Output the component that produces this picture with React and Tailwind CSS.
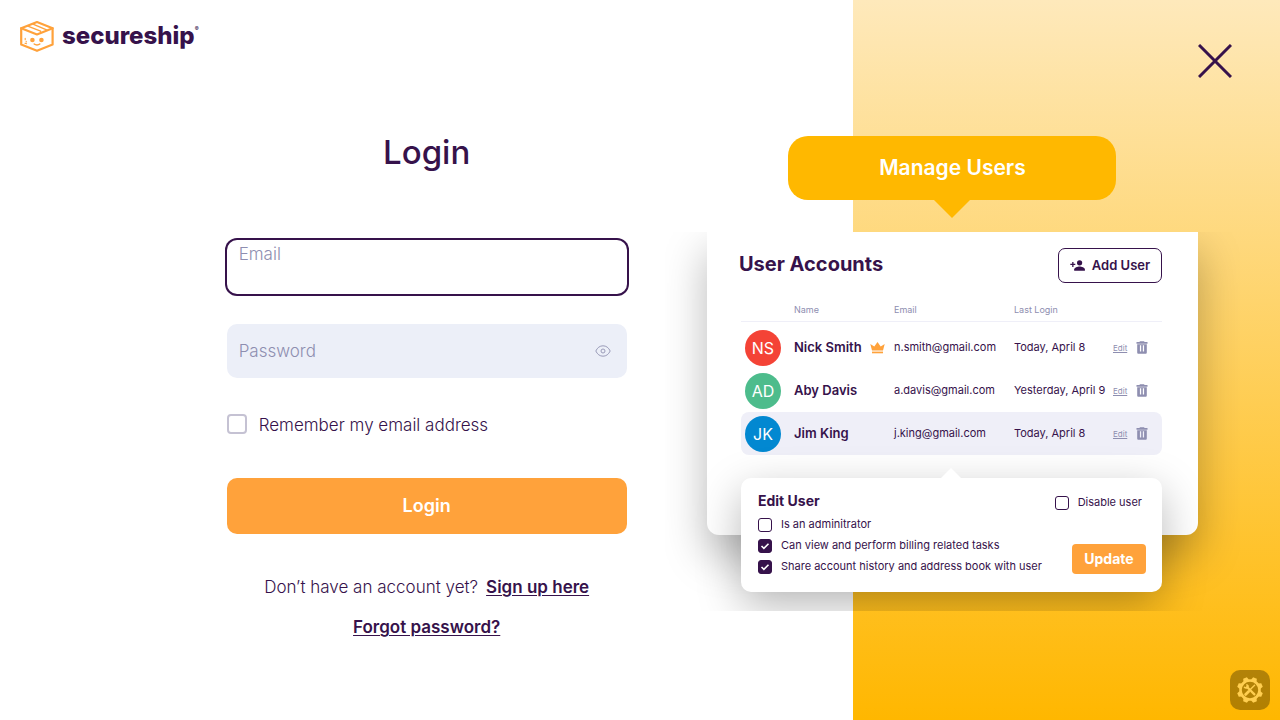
import React, { useState } from "react";

const USERS = [
  { initials: "NS", name: "Nick Smith", email: "n.smith@gmail.com", login: "Today, April 8", color: "bg-[#f44336]", owner: true },
  { initials: "AD", name: "Aby Davis", email: "a.davis@gmail.com", login: "Yesterday, April 9", color: "bg-[#4dbc8c]" },
  { initials: "JK", name: "Jim King", email: "j.king@gmail.com", login: "Today, April 8", color: "bg-[#0288d1]", selected: true },
];

function BoxLogo() {
  return (
    <svg viewBox="0 0 34 32" className="h-8 w-[34px] shrink-0" fill="none" stroke="#ffa23b" strokeWidth="2.2" strokeLinejoin="round" strokeLinecap="round" aria-hidden="true">
      <path d="M17 2 32.600 8.200v16.400L17 30.800 1.200 24.600V8.200Z" />
      <path d="M1.200 8.200 17 14.400l15.600-6.200" />
      <path d="M13 4.200 26.600 9.800M7.800 6.200 20.600 11.200v1.400" strokeWidth="1.300" />
      <path d="M14.200 24c1.400 1.200 4.200 1.200 5.600 0" strokeWidth="1.500" />
      <path d="M5.200 18.200v1.600M6.200 21.200v.8M5 23.200l1.600.5" strokeWidth="1.100" />
      <circle cx="12.400" cy="20" r="2.300" fill="#ffa23b" stroke="none" />
      <circle cx="21.400" cy="20" r="2.300" fill="#ffa23b" stroke="none" />
    </svg>
  );
}

function EyeIcon() {
  return (
    <svg viewBox="0 0 16 12" className="h-3 w-4" fill="none" stroke="#9a9bb8" strokeWidth="1" aria-hidden="true">
      <path d="M.8 6C2.400 2.600 4.900.8 8 .8S13.600 2.600 15.200 6C13.600 9.400 11.100 11.200 8 11.200S2.400 9.400.8 6Z" />
      <circle cx="8" cy="6" r="2" />
    </svg>
  );
}

function CrownIcon() {
  return (
    <svg viewBox="0 0 15 12" className="h-3 w-[15px]" fill="#ffa23b" aria-hidden="true">
      <path d="M2 8.400.3 2 4.300 4.600 7.500 0l3.200 4.600L14.700 2 13 8.400Z" />
      <path d="M2 9.600h11v1.700H2z" />
    </svg>
  );
}

function TrashIcon() {
  return (
    <svg viewBox="0 0 12 13" className="h-[13px] w-3" fill="#8e8eb0" aria-hidden="true">
      <path fillRule="evenodd" d="M4 .2h4l.6.9H11.500v1.600H.5V1.100h2.900ZM1.200 3.300h9.600v8.200c0 .8-.5 1.300-1.300 1.300h-7c-.8 0-1.300-.5-1.300-1.300ZM3.900 4.200v6.400h1.300V4.200Zm2.900 0v6.400h1.300V4.200Z" />
    </svg>
  );
}

function AddUserIcon() {
  return (
    <svg viewBox="0 0 15 11" className="h-[11px] w-[15px]" fill="#36124b" aria-hidden="true">
      <circle cx="9.600" cy="2.800" r="2.600" />
      <path d="M4.200 10.800V9.300C4.200 7.400 7.600 6.400 9.600 6.400s5.300 1 5.300 2.900v1.500Z" />
      <path d="M2.200 2h1.300v1.800h1.800v1.300H3.500v1.800H2.200V5.100H.3V3.800h1.900Z" />
    </svg>
  );
}

function ToolsIcon() {
  return (
    <svg viewBox="-14 -14 28 28" className="size-7" aria-hidden="true">
      <g fill="#ffce50">
        <path fillRule="evenodd" d="M0-10.800a10.800 10.800 0 1 1 0 21.600a10.800 10.800 0 1 1 0-21.600ZM0-8.200a8.200 8.200 0 1 0 0 16.400a8.200 8.200 0 1 0 0-16.400Z" />
        {[22.5, 67.5, 112.5, 157.5, 202.5, 247.5, 292.5, 337.5].map((a) => (
          <path key={a} d="M-3-9.800-2-13h4l1 3.200Z" transform={`rotate(${a})`} />
        ))}
      </g>
      <g stroke="#ffce50" fill="none" strokeLinecap="round">
        <path d="M4.600-4.800-.2 0" strokeWidth="1.400" />
        <path d="M-1.400 1.400-4.400 4.400" strokeWidth="2.800" />
        <path d="M-3-3 4.400 4.400" strokeWidth="2.200" />
        <path d="M-5.400-2.600C-4.200-1.600-2.200-2.200-2-3.400S-3-5-3-5" strokeWidth="1.800" />
      </g>
    </svg>
  );
}

function PermissionBox({ label, defaultChecked }) {
  return (
    <label className="flex h-[21px] items-center gap-[9px] text-[11px]">
      <span className="grid">
        <input
          type="checkbox"
          defaultChecked={defaultChecked}
          className="peer col-start-1 row-start-1 size-[14px] appearance-none rounded-[3px] border border-[#36124b] bg-white checked:bg-[#36124b]"
        />
        <svg viewBox="0 0 14 14" className="pointer-events-none invisible col-start-1 row-start-1 size-[14px] peer-checked:visible" fill="none" stroke="#fff" strokeWidth="1.600" aria-hidden="true">
          <path d="m3.500 7 2.400 2.400 4.600-4.600" />
        </svg>
      </span>
      {label}
    </label>
  );
}

function LoginForm() {
  const [visible, setVisible] = useState(false);
  return (
    <form className="mx-auto mt-[76px] flex w-full max-w-[400px] flex-col" onSubmit={(e) => e.preventDefault()}>
      <h1 className="text-center text-[33px] leading-12 font-medium">Login</h1>

      <div className="mt-16 h-[54px] rounded-[10px] px-3 ring-2 ring-[#36124b]">
        <label htmlFor="email" className="block text-[17px] leading-7 font-light text-[#8e8eb0]">Email</label>
        <input id="email" type="email" className="block h-6 w-full bg-transparent text-[17px] outline-none" />
      </div>

      <div className="relative mt-[30px] flex h-[54px] items-center rounded-[10px] bg-[#eceff8] pr-4 pl-3">
        <input
          id="password"
          type={visible ? "text" : "password"}
          placeholder=" "
          className="peer h-full min-w-0 flex-1 bg-transparent text-[17px] outline-none"
        />
        <label htmlFor="password" className="pointer-events-none invisible absolute left-3 text-[17px] leading-7 font-light text-[#8e8eb0] peer-placeholder-shown:visible">
          Password
        </label>
        <button type="button" aria-label="Show password" onClick={() => setVisible(!visible)}>
          <EyeIcon />
        </button>
      </div>

      <label className="mt-[34px] flex h-6 items-center gap-3 text-[17px] font-light">
        <input type="checkbox" className="size-5 appearance-none rounded-[4px] border-2 border-[#c5c2d3] bg-white checked:bg-[#36124b]" />
        <span className="pt-1">Remember my email address</span>
      </label>

      <button type="submit" className="mt-[42px] h-14 rounded-[10px] bg-[#ffa23b] text-lg font-semibold text-white">
        Login
      </button>

      <div className="mt-[34px] flex flex-col items-center">
        <p className="flex h-10 items-center gap-2 text-[17px] font-light">
          Don’t have an account yet?
          <a href="#signup" className="font-semibold underline underline-offset-2">Sign up here</a>
        </p>
        <p className="flex h-10 items-center text-[17px]">
          <a href="#forgot" className="font-semibold underline underline-offset-2">Forgot password?</a>
        </p>
      </div>
    </form>
  );
}

function UserTable() {
  return (
    <table className="mt-4 w-full table-fixed border-separate border-spacing-0 text-left">
      <colgroup>
        <col className="w-[53px]" />
        <col className="w-[100px]" />
        <col />
        <col className="w-[99px]" />
        <col className="w-[23px]" />
        <col className="w-[26px]" />
      </colgroup>
      <thead>
        <tr className="text-[9px] text-[#8e8eb0] *:h-[23px] *:border-b *:border-[#efeff8] *:p-0 *:font-normal">
          <th />
          <th>Name</th>
          <th>Email</th>
          <th>Last Login</th>
          <th />
          <th />
        </tr>
      </thead>
      <tbody>
        <tr className="h-1"><td colSpan={6} className="p-0" /></tr>
        {USERS.map((u) => (
          <tr key={u.name} className={u.selected ? "*:bg-[#efeff8]" : ""}>
            <td className="h-[43px] rounded-l-lg p-0 pl-1">
              <span className={`flex size-9 items-center justify-center rounded-full text-base text-white ${u.color}`}>{u.initials}</span>
            </td>
            <td className="p-0 text-[13px] font-semibold whitespace-nowrap">
              <span className="flex items-center gap-2">
                {u.name}
                {u.owner && <CrownIcon />}
              </span>
            </td>
            <td className="p-0 text-[11px]">{u.email}</td>
            <td className="p-0 text-[11px] whitespace-nowrap">{u.login}</td>
            <td className="p-0 text-[8px] text-[#8e8eb0]">
              <a href="#edit" className="underline">Edit</a>
            </td>
            <td className="rounded-r-lg p-0">
              <button type="button" aria-label={`Delete ${u.name}`} className="flex">
                <TrashIcon />
              </button>
            </td>
          </tr>
        ))}
      </tbody>
    </table>
  );
}

function Showcase() {
  return (
    <section className="z-10 col-start-2 col-end-4 row-start-1 mt-[136px] mr-10 hidden w-[575px] self-start justify-self-end lg:block">
      <div className="mx-auto flex w-[328px] flex-col items-center">
        <h2 className="flex h-16 w-full items-center justify-center rounded-[20px] bg-[#ffb800] text-[21px] font-semibold text-white">
          Manage Users
        </h2>
        <svg viewBox="0 0 38 18" className="h-[18px] w-[38px]" fill="#ffb800" aria-hidden="true">
          <path d="M1 0h36L19 18Z" />
        </svg>
      </div>

      <div className="mt-[14px] overflow-hidden px-[42px] pb-[19px]">
        <div className="rounded-b-xl bg-white pt-4 pr-9 pb-20 pl-8 shadow-[0_20px_44px_rgba(0,0,0,0.28)]">
          <div className="flex items-start justify-between">
            <h3 className="text-xl leading-8 font-bold">User Accounts</h3>
            <button type="button" className="flex h-[35px] w-[104px] items-center justify-center gap-[7px] rounded-[7px] border border-[#36124b] text-[13px] font-semibold">
              <AddUserIcon />
              Add User
            </button>
          </div>
          <div className="pl-0.5">
            <UserTable />
          </div>
        </div>

        <div className="relative mr-9 -mt-[57px] ml-[34px] h-[114px] rounded-[10px] bg-white shadow-[0_14px_44px_rgba(0,0,0,0.28)]">
          <svg viewBox="0 0 20 10" className="absolute -top-[10px] left-1/2 h-[10px] w-5 -translate-x-1/2" fill="#fff" aria-hidden="true">
            <path d="M0 10 10 0l10 10Z" />
          </svg>
          <div className="flex justify-between pt-[10px] pr-4 pl-[17px]">
            <fieldset>
              <legend className="text-sm leading-[26px] font-bold">Edit User</legend>
              <PermissionBox label="Is an adminitrator" />
              <PermissionBox label="Can view and perform billing related tasks" defaultChecked />
              <PermissionBox label="Share account history and address book with user" defaultChecked />
            </fieldset>
            <div className="flex flex-col items-end pt-1">
              <div className="pr-1">
                <PermissionBox label="Disable user" />
              </div>
              <button type="button" className="mt-[31px] h-[30px] w-[74px] rounded bg-[#ffa23b] text-sm font-bold text-white">
                Update
              </button>
            </div>
          </div>
        </div>
      </div>
    </section>
  );
}

export default function App() {
  return (
    <div className="grid min-h-screen grid-cols-1 bg-white font-['Inter',sans-serif] text-[#36124b] lg:grid-cols-3">
      <main className="col-start-1 row-start-1 px-5 pt-5 pb-10 lg:col-end-3">
        <a href="#home" className="flex h-8 w-fit items-center gap-2" aria-label="Secureship home">
          <BoxLogo />
          <span className="flex text-2xl leading-8 font-extrabold">
            secureship<sup className="text-[6px] leading-6">®</sup>
          </span>
        </a>
        <LoginForm />
      </main>

      <aside className="col-start-3 row-start-1 hidden flex-col items-end justify-between bg-[linear-gradient(180deg,#fee9bb,#ffb700)] lg:flex">
        <button type="button" aria-label="Close" className="mt-11 mr-12">
          <svg viewBox="0 0 34 34" className="size-[34px]" fill="none" stroke="#36124b" strokeWidth="3" aria-hidden="true">
            <path d="m1 1 32 32M33 1 1 33" />
          </svg>
        </button>
        <button type="button" aria-label="Settings" className="mr-[10px] mb-[10px] flex size-10 items-center justify-center rounded-[10px] bg-black/30">
          <ToolsIcon />
        </button>
      </aside>

      <Showcase />
    </div>
  );
}
